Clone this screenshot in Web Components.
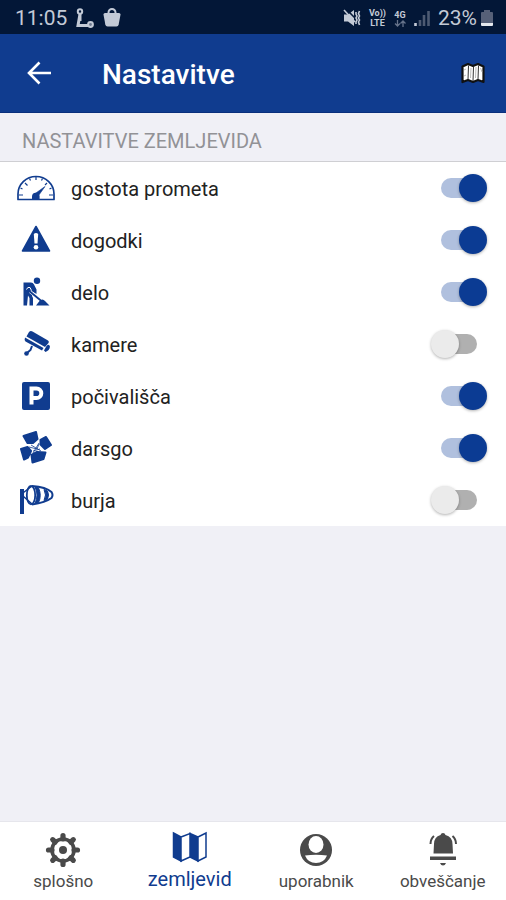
<!DOCTYPE html>
<html lang="sl">
<head>
<meta charset="utf-8">
<meta name="viewport" content="width=device-width, initial-scale=1">
<title>Nastavitve</title>
<style>
    body {
        margin: 0;
        font-family: Roboto, "Liberation Sans", sans-serif;
        background: #f0f0f6;
        color: #222;
    }
</style>
</head>
<body>
<settings-page>
    <status-bar slot="top"></status-bar>
    <app-header slot="top">Nastavitve</app-header>

    <settings-group heading="NASTAVITVE ZEMLJEVIDA">
        <toggle-row icon="gauge" checked>gostota prometa</toggle-row>
        <toggle-row icon="warning" checked>dogodki</toggle-row>
        <toggle-row icon="works" checked>delo</toggle-row>
        <toggle-row icon="camera">kamere</toggle-row>
        <toggle-row icon="parking" checked>počivališča</toggle-row>
        <toggle-row icon="darsgo" checked>darsgo</toggle-row>
        <toggle-row icon="windsock">burja</toggle-row>
    </settings-group>

    <tab-bar slot="bottom">
        <tab-item icon="gear" href="#splosno">splošno</tab-item>
        <tab-item icon="map" href="#zemljevid" active>zemljevid</tab-item>
        <tab-item icon="user" href="#uporabnik">uporabnik</tab-item>
        <tab-item icon="bell" href="#obvescanje">obveščanje</tab-item>
    </tab-bar>
</settings-page>

<script>
(function() {
    "use strict";

    // every icon is drawn with currentColor on its own viewBox
    const icons = {
        route: `<svg viewBox="0 0 20 20" width="20" height="20" fill="none" stroke="currentColor" stroke-width="2">
            <circle cx="5" cy="3.500" r="2.200"/><path d="M5 6 3 17.500H13M5 6V13" stroke-width="3"/>
            <circle cx="15.500" cy="16.500" r="2.400" fill="#6d7a90"/></svg>`,
        bag: `<svg viewBox="0 0 18 20" width="18" height="20">
            <path d="M5.500 6V4.500a3.500 3.500 0 0 1 7 0V6" fill="none" stroke="currentColor" stroke-width="2"/>
            <path d="M2 5h14q1.500 0 1.500 1.500l-1.800 10q-.4 2-2.200 2h-9q-1.800 0-2.200-2L.5 6.500Q.5 5 2 5z" fill="currentColor"/></svg>`,
        mute: `<svg viewBox="0 0 18 18" width="18" height="18">
            <path d="M1 5.500h4L11 1v16l-6-4.500H1z" fill="currentColor"/>
            <path d="M3 0 13 10" stroke="#031737" stroke-width="1.600"/>
            <path d="M1 1 12 13" stroke="currentColor" stroke-width="1.600"/>
            <path d="M13 3v2l1 2-1 2 1 2-1 2v2M16.500 2l-1 2.500 1 2.500-1 2 1 2-1 2 1 3" fill="none" stroke="currentColor" stroke-width="1.600"/></svg>`,
        signal: `<svg viewBox="0 0 16 16" width="16" height="16" stroke="#4d5a72" stroke-width="2.600">
            <path d="M6 16v-6M10 16V5M14.500 16V1"/><path d="M1.500 16v-3" stroke="currentColor"/></svg>`,
        battery: `<svg viewBox="0 0 12 18" width="12" height="18">
            <path d="M3 1h6v2h2q1 0 1 1v10H0V4q0-1 1-1h2z" fill="#566078"/>
            <path d="M0 14h12v2q0 1-1 1H1q-1 0-1-1z" fill="#e4e8ee"/></svg>`,
        updown: `<svg viewBox="0 0 12 7" width="12" height="7" fill="none" stroke="#65728a" stroke-width="1.300">
            <path d="M3.500 0v6M1 3.500 3.500 6 6 3.500M9 7V1M6.500 3.500 9 1l2.500 2.500"/></svg>`,
        back: `<svg viewBox="0 0 24 24" width="24" height="24" fill="none" stroke="currentColor" stroke-width="2.600">
            <path d="M12.500 1.500 2 12l10.500 10.500M2 12h22"/></svg>`,
        folded: `<svg viewBox="0 0 26 22" width="26" height="22">
            <path d="M2.500 4.500 8 2l5 2 5-2 5.500 2.500V20L18 18l-5 2-5-2-5.500 2z" fill="#fff" stroke="#111" stroke-width="2.200" stroke-linejoin="round"/>
            <path d="m8.500 3.500-.5 14M13.500 5 13 19M18.500 3.500l-.5 14" stroke="#333" stroke-width="1"/>
            <path d="m11 6-.5 10M16 5l-.5 11M4 8l2-1M20.500 6l1.500 4M4 14l2-1" stroke="#aaa" stroke-width=".8"/></svg>`,
        gauge: `<svg viewBox="0 0 38 26" width="38" height="26" fill="none" stroke="currentColor">
            <path d="M1 24.500V19a18 17.500 0 0 1 36 0v5.500z" stroke-width="1.700" stroke-linejoin="round"/>
            <path d="M19 2v3M8 8l2.500 2.500M30 8l-2 2M2 20h4M36 20h-4M12.500 3.500l1 2M25.500 3.500l-1 2M3.500 13l2 1M34.500 13l-2 1" stroke-width="1.200"/>
            <path d="m17.500 19 10.500-7.500-7.500 10.500z" fill="currentColor" stroke-width=".6"/>
            <path d="M15 24v-2.500a3.800 3.800 0 1 1 7.600 0V24z" fill="currentColor" stroke="none"/></svg>`,
        warning: `<svg viewBox="0 0 30 30" width="30" height="30">
            <path d="M15 1.500 28.500 26H1.500z" fill="currentColor" stroke="currentColor" stroke-width="1.600" stroke-linejoin="round"/>
            <path d="M12.800 9q2.200-1.800 4.400 0l-.7 9.500h-3z" fill="#fff"/><circle cx="15" cy="22.200" r="2.300" fill="#fff"/></svg>`,
        works: `<svg viewBox="0 0 28 30" width="28" height="30" fill="currentColor">
            <circle cx="15" cy="3.800" r="3.200"/>
            <path d="M1.500 5.500H9q2 0 3 2l2.500 5V17L11 15l-1 4 1 2v7.500H7.500V21L6 18.500 5 28.500H1.500z"/>
            <path d="M4.500 12.500q1-3 3.500-2l1.500 3" fill="none" stroke="#fff" stroke-width="1"/>
            <path d="m8 14.500 11 9" stroke="#fff" stroke-width="3"/>
            <path d="m6 13 14 11.500" stroke="currentColor" stroke-width="1.800"/>
            <path d="m14 28.500 3.500-4.500q3-3 5.500 0l4.500 4.500z"/></svg>`,
        camera: `<svg viewBox="0 0 30 30" width="30" height="30" fill="currentColor">
            <path d="M8 3q1.500-1.500 3.500-.5l15.500 9q1.500 1 .5 2.500l-3.500 4L5.500 7.500z"/>
            <path d="m4 8.500 18.500 10.500-1.500 2.500L4.500 12.500q-1.500-1-.5-4z"/>
            <path d="m23 21.500 2.500-4.500q2.500-2.500 3.500.5-.5 4-4.500 5.500z"/>
            <path d="M11 17 9.500 21 6 24" fill="none" stroke="currentColor" stroke-width="2"/>
            <circle cx="5.500" cy="24.500" r="2.300"/></svg>`,
        parking: `<svg viewBox="0 0 30 30" width="30" height="30">
            <rect x="1" y="1" width="28" height="28" rx="2" fill="currentColor"/>
            <path d="M10.500 23.500V7.500h5a4.800 4.800 0 0 1 0 9.600h-5" fill="none" stroke="#fff" stroke-width="4"/></svg>`,
        darsgo: `<svg viewBox="0 0 34 34" width="34" height="34" stroke="currentColor" stroke-width="2" stroke-linejoin="round">
            <path d="m4.500 5 12.500-4 1.500 7-4.500 4H8.500zM21.500 9 27 6l5 8-6 4-4.500-4.500zM12.500 24l5.500-3 8.500.5-2 6.500-11 3.500zM2 18l6.500-2 3.500 4-3 6.500L5 28.500z" fill="currentColor"/>
            <path d="m12 14 10 6M20 12l-6 10M10 16l8 2 2-5M14 20l7-2" fill="none" stroke-width=".8"/></svg>`,
        windsock: `<svg viewBox="0 0 36 32" width="36" height="32" fill="none" stroke="currentColor">
            <path d="M4 5v25" stroke-width="4"/>
            <path d="M5.500 8.500 14 2M5.500 12.500 14 20" stroke-width="1.500"/>
            <path d="M14 2q14 1 19.500 6 2 3 0 6-6 4.500-19.500 6.500" stroke-width="2"/>
            <ellipse cx="13" cy="11.200" rx="4.200" ry="9.200" stroke-width="1.800"/>
            <path d="M17 3q4 8 0 16.500l3.500-.8q3.500-7.200 0-14.900zM26 5.500q3 5.500 0 11l3.500-1.500q2-4 0-8z" fill="currentColor"/></svg>`,
        gear: `<svg viewBox="0 0 36 36" width="36" height="36" fill="none" stroke="currentColor">
            <circle cx="18" cy="18" r="11" stroke-width="3.600"/><circle cx="18" cy="18" r="4" fill="currentColor" stroke="none"/>
            <path d="M18 3.500V7M18 32.500V29M3.500 18H7M32.500 18H29M7.700 7.700l2.500 2.500M28.300 28.300l-2.500-2.500M28.300 7.700l-2.500 2.500M7.700 28.300l2.500-2.500" stroke-width="5.200" stroke-linecap="round"/></svg>`,
        map: `<svg viewBox="0 0 36 36" width="36" height="36">
            <path d="m1.500 3 7.500 4v24l-7.500-4zM18 3.500l8 3.500v24l-8-4z" fill="currentColor" stroke="currentColor" stroke-width="1.500"/>
            <path d="m9 7 9-3.500V27l-9 4zM26 7l8-4v24l-8 4z" fill="#fff" stroke="currentColor" stroke-width="1.500"/></svg>`,
        user: `<svg viewBox="0 0 36 36" width="36" height="36">
            <circle cx="18" cy="18" r="16" fill="currentColor"/>
            <ellipse cx="18" cy="12.500" rx="7.500" ry="8.500" fill="#fff"/>
            <path d="M7 23.500q11-1.500 22 0-3 7.500-11 7.500T7 23.500z" fill="#fff"/></svg>`,
        bell: `<svg viewBox="0 0 36 36" width="36" height="36" fill="currentColor">
            <path d="M18 1q2 0 2.500 2 7 2 7 9l.5 9.500H8.500L9 12q0-7 6.500-9Q16 1 18 1z"/>
            <path d="M5 24.500h26V28H5zM15 31h6q-1 2.500-3 2.500T15 31z"/>
            <path d="M9 4q-3.500 3-3.500 8M27.500 4q3.500 3 3.500 8" fill="none" stroke="currentColor" stroke-width="2"/></svg>`
    };

    class settingsPage extends HTMLElement {
        constructor() {
            super();
            this.attachShadow({mode: 'open'}).innerHTML = `
                <style>
                    :host { display: flex; flex-direction: column; min-height: 100vh; }
                    main { flex: 1; }
                </style>
                <slot name="top"></slot>
                <main><slot></slot></main>
                <slot name="bottom"></slot>
            `;
        }
    }

    class statusBar extends HTMLElement {
        constructor() {
            super();
            this.attachShadow({mode: 'open'}).innerHTML = `
                <style>
                    :host {
                        display: flex;
                        align-items: center;
                        justify-content: space-between;
                        height: 34px;
                        padding: 2px 13px 0 15px;
                        box-sizing: border-box;
                        background: #031737;
                        color: #c3cad6;
                        font-size: 21px;
                    }
                    div { display: flex; align-items: center; gap: 8px; }
                    svg { display: block; }
                    .stack {
                        display: grid;
                        justify-items: center;
                        font-size: 9px;
                        line-height: 10px;
                        font-weight: 700;
                    }
                    .power { gap: 4px; }
                </style>
                <div><span>11:05</span>${icons.route}${icons.bag}</div>
                <div>
                    ${icons.mute}
                    <span class="stack"><span>Vo))</span><span>LTE</span></span>
                    <span class="stack"><span>4G</span>${icons.updown}</span>
                    ${icons.signal}
                    <div class="power"><span>23%</span>${icons.battery}</div>
                </div>
            `;
        }
    }

    class appHeader extends HTMLElement {
        constructor() {
            super();
            this.attachShadow({mode: 'open'}).innerHTML = `
                <style>
                    :host {
                        display: flex;
                        align-items: center;
                        height: 79px;
                        padding: 0 20px 0 27px;
                        box-sizing: border-box;
                        background: #103c8f;
                        border-bottom: 1px solid #0a2f7c;
                        color: #fff;
                    }
                    button { display: flex; padding: 0; border: 0; background: none; color: inherit; }
                    h1 { flex: 1; margin: 4px 0 0 51px; font-size: 28px; line-height: 32px; font-weight: 500; }
                </style>
                <button type="button" aria-label="Nazaj">${icons.back}</button>
                <h1><slot></slot></h1>
                <button type="button" aria-label="Zemljevid">${icons.folded}</button>
            `;
        }
    }

    class settingsGroup extends HTMLElement {
        constructor() {
            super();
            this.attachShadow({mode: 'open'}).innerHTML = `
                <style>
                    :host { display: block; }
                    h2 {
                        margin: 0;
                        padding: 16px 22px 8px;
                        border-bottom: 1px solid #cfcfd3;
                        font-size: 20px;
                        line-height: 24px;
                        font-weight: 400;
                        color: #929296;
                    }
                    section { background: #fff; }
                </style>
                <h2></h2>
                <section><slot></slot></section>
            `;
            this.shadowRoot.querySelector('h2').textContent = this.getAttribute('heading');
        }
    }

    class toggleRow extends HTMLElement {
        constructor() {
            super();
            const checked = this.hasAttribute('checked') ? 'checked' : '';
            this.attachShadow({mode: 'open'}).innerHTML = `
                <style>
                    :host {
                        display: flex;
                        align-items: center;
                        height: 52px;
                        padding: 0 19px 0 16px;
                    }
                    .icon { display: flex; justify-content: center; width: 40px; color: #103c8f; }
                    label { flex: 1; padding: 2px 0 0 15px; font-size: 20px; line-height: 24px; }
                    input {
                        appearance: none;
                        display: grid;
                        align-items: center;
                        width: 56px;
                        height: 28px;
                        margin: 0;
                    }
                    input::before, input::after { content: ""; grid-area: 1 / 1; }
                    input::before {
                        height: 20px;
                        margin: 0 10px;
                        border-radius: 10px;
                        background: #b0b0b0;
                    }
                    input::after {
                        width: 28px;
                        height: 28px;
                        border-radius: 50%;
                        background: #ebebeb;
                        box-shadow: 0 1px 3px rgba(0, 0, 0, .3);
                    }
                    input:checked::before { background: #b0c0de; }
                    input:checked::after { justify-self: end; background: #0b3b93; }
                </style>
                <span class="icon">${icons[this.getAttribute('icon')]}</span>
                <label for="toggle"><slot></slot></label>
                <input id="toggle" type="checkbox" ${checked}>
            `;
        }
    }

    class tabBar extends HTMLElement {
        constructor() {
            super();
            this.attachShadow({mode: 'open'}).innerHTML = `
                <style>
                    :host { display: block; background: #fff; border-top: 1px solid #e6e6ec; }
                    nav { display: grid; grid-template-columns: repeat(4, 1fr); height: 78px; }
                </style>
                <nav><slot></slot></nav>
            `;
        }
    }

    class tabItem extends HTMLElement {
        constructor() {
            super();
            this.attachShadow({mode: 'open'}).innerHTML = `
                <style>
                    :host { display: block; color: #4a4a4a; font-size: 17px; }
                    :host([active]) { color: #103c8f; font-size: 20px; }
                    a {
                        display: flex;
                        flex-direction: column;
                        align-items: center;
                        gap: 1px;
                        padding-top: 10px;
                        color: inherit;
                        line-height: 24px;
                        text-decoration: none;
                    }
                    :host([active]) a { padding-top: 8px; }
                </style>
                <a href="${this.getAttribute('href')}">${icons[this.getAttribute('icon')]}<span><slot></slot></span></a>
            `;
        }
    }

    window.customElements.define('settings-page', settingsPage);
    window.customElements.define('status-bar', statusBar);
    window.customElements.define('app-header', appHeader);
    window.customElements.define('settings-group', settingsGroup);
    window.customElements.define('toggle-row', toggleRow);
    window.customElements.define('tab-bar', tabBar);
    window.customElements.define('tab-item', tabItem);
})();
</script>
</body>
</html>
